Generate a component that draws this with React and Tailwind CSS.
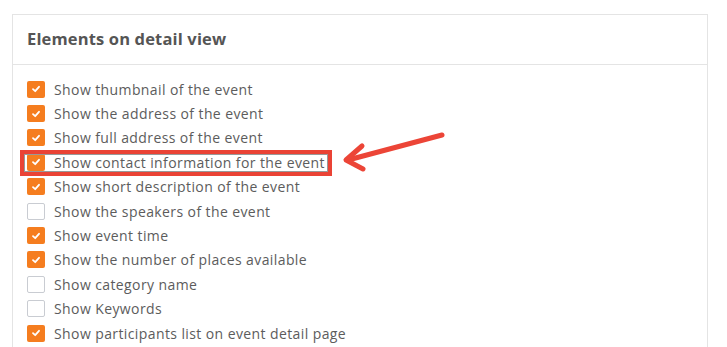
import React from "react";

const items = [
  { label: "Show thumbnail of the event", checked: true },
  { label: "Show the address of the event", checked: true },
  { label: "Show full address of the event", checked: true },
  { label: "Show contact information for the event", checked: true },
  { label: "Show short description of the event", checked: true },
  { label: "Show the speakers of the event", checked: false },
  { label: "Show event time", checked: true },
  { label: "Show the number of places available", checked: true },
  { label: "Show category name", checked: false },
  { label: "Show Keywords", checked: false },
  { label: "Show participants list on event detail page", checked: true },
];

function Box({ checked }) {
  if (!checked) {
    return <span className="w-[18px] h-[17px] rounded-[2px] border border-[#c9ccd2] bg-white shrink-0" />;
  }
  return (
    <span className="w-[18px] h-[17px] rounded-[2px] bg-[#f57d1f] flex items-center justify-center shrink-0">
      <svg width="10" height="10" viewBox="0 0 10 10" fill="none">
        <path d="M2 5.2 L4.2 7.2 L8 2.8" stroke="white" strokeWidth="1.8" strokeLinecap="round" strokeLinejoin="round" />
      </svg>
    </span>
  );
}

export default function App() {
  return (
    <div className="w-[727px] h-[347px] bg-white overflow-hidden relative" style={{ fontFamily: '"Open Sans", sans-serif' }}>
      <div className="absolute left-[12px] top-[14px] w-[696px] h-[400px] border border-[#e4e4e4]">
        <div className="h-[50px] flex items-center px-[14px] border-b border-[#e4e4e4]">
          <h2 className="text-[16.5px] font-bold text-[#555] tracking-[0.15px]">Elements on detail view</h2>
        </div>
        <div className="pt-[12px] px-[14px] flex flex-col">
          {items.map((it) => (
            <div key={it.label} className="h-[24.4px] flex items-center gap-[9px]">
              <Box checked={it.checked} />
              <span className="text-[14px] text-[#5c5c5c] tracking-[0.4px]">{it.label}</span>
            </div>
          ))}
        </div>
      </div>

      {/* highlight box */}
      <div className="absolute left-[20px] top-[150px] w-[312px] h-[26px] border-[4px] border-[#ea4335] shadow-[inset_0_0_0_1px_#999]" />

      {/* arrow */}
      <svg className="absolute left-0 top-0" width="727" height="347">
        <g stroke="#ec4537" strokeWidth="5" strokeLinecap="round" strokeLinejoin="round" fill="none">
          <line x1="442" y1="135" x2="348" y2="160" />
          <polyline points="362,146 346,160 363,169" />
        </g>
      </svg>
    </div>
  );
}
